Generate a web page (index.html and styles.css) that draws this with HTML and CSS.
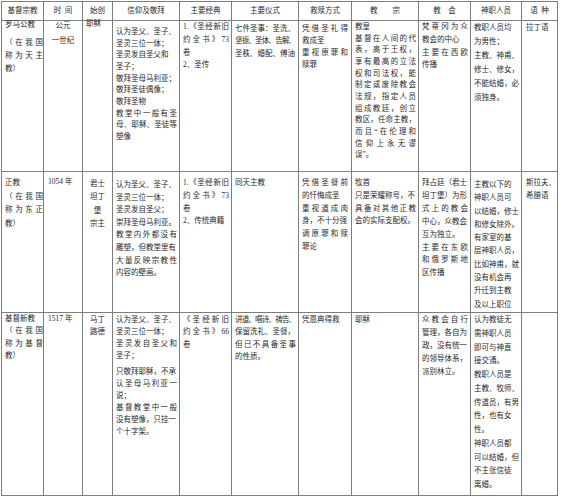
FILE: index.html
```html
<!DOCTYPE html>
<html lang="zh-CN">
<head>
<meta charset="utf-8">
<title>基督宗教比较表</title>
<link rel="stylesheet" href="styles.css">
</head>
<body>
<div class="tbl">
  <div class="h">基督宗教</div>
  <div class="h">时&nbsp;&nbsp;间</div>
  <div class="h">始创</div>
  <div class="h">信仰及敬拜</div>
  <div class="h">主要经典</div>
  <div class="h">主要仪式</div>
  <div class="h">救赎方式</div>
  <div class="h">教　　宗</div>
  <div class="h">教　会</div>
  <div class="h">神职人员</div>
  <div class="h">语&nbsp;&nbsp;种</div>

  <!-- 罗马公教 -->
  <div class="c r1 zj rel">
    <span class="l lead">罗马公教</span><span class="l j">（在我国</span><span class="l j">称为天主</span><span class="l">教）</span>
  </div>
  <div class="c r1 ctr hi lh15">
    <span class="l">公元</span><span class="l">一世纪</span>
  </div>
  <div class="c r1 hi">
    <span class="l">耶稣</span>
  </div>
  <div class="c r1 p5 lh117">
    <span class="l">认为圣父、圣子、</span><span class="l">圣灵三位一体；</span><span class="l">圣灵发自圣父和</span><span class="l">圣子；</span><span class="l">敬拜圣母马利亚；</span><span class="l">敬拜圣徒偶像；</span><span class="l">敬拜圣物</span><span class="l j">教堂中一般有圣</span><span class="l j">母、耶稣、圣徒等</span><span class="l">塑像</span>
  </div>
  <div class="c r1 p0">
    <span class="l j">1.《圣经新旧</span><span class="l j">约全书》73</span><span class="l">卷</span><span class="l">2、圣传</span>
  </div>
  <div class="c r1 p2 lh124">
    <span class="l">七件圣事：圣洗、</span><span class="l t">坚振、圣体、告解、</span><span class="l">圣秩、婚配、傅油</span>
  </div>
  <div class="c r1 p2 lh12 sr">
    <span class="l j">凭借圣礼得</span><span class="l">救成圣</span><span class="l j">重视原罪和</span><span class="l">赎罪</span>
  </div>
  <div class="c r1 p0 lh117">
    <span class="l">教皇</span><span class="l j">基督在人间的代</span><span class="l j">表，高于王权，</span><span class="l j">享有最高的立法</span><span class="l j">权和司法权，能</span><span class="l j">制定或废除教会</span><span class="l j">法规，指定人员</span><span class="l j">组成教廷，创立</span><span class="l j">教区，任命主教，</span><span class="l j">而且“在伦理和</span><span class="l j">信仰上永无谬</span><span class="l">误”。</span>
  </div>
  <div class="c r1 p0">
    <span class="l j">梵蒂冈为众</span><span class="l">教会的中心</span><span class="l j">主要在西欧</span><span class="l">传播</span>
  </div>
  <div class="c r1 p0 lh14 sm">
    <span class="l">教职人员均</span><span class="l">为男性；</span><span class="l">主教、神甫、</span><span class="l">修士、修女，</span><span class="l">不能结婚，必</span><span class="l">须独身。</span>
  </div>
  <div class="c r1 yu">
    <span class="l">拉丁语</span>
  </div>

  <!-- 正教 -->
  <div class="c r2 zj p4 lh134">
    <span class="l">正教</span><span class="l j">（在我国</span><span class="l j">称为东正</span><span class="l">教）</span>
  </div>
  <div class="c r2 p4 tm">
    <span class="l">1054 年</span>
  </div>
  <div class="c r2 ctr lh133">
    <span class="l">君士</span><span class="l">坦丁</span><span class="l">堡</span><span class="l">宗主</span>
  </div>
  <div class="c r2 p7 lh126">
    <span class="l">认为圣父、圣子、</span><span class="l">圣灵三位一体；</span><span class="l">圣灵发自圣父；</span><span class="l">崇拜圣母马利亚。</span><span class="l j">教堂内外都没有</span><span class="l">雕塑，但教堂里有</span><span class="l j">大量反映宗教性</span><span class="l">内容的壁画。</span>
  </div>
  <div class="c r2">
    <span class="l j">1.《圣经新旧</span><span class="l j">约全书》73</span><span class="l">卷</span><span class="l">2、传统典籍</span>
  </div>
  <div class="c r2">
    <span class="l">同天主教</span>
  </div>
  <div class="c r2 sr">
    <span class="l j">凭借圣餐前</span><span class="l">的忏悔成圣</span><span class="l j">重视道成肉</span><span class="l">身，不十分强</span><span class="l j">调原罪和赎</span><span class="l">罪论</span>
  </div>
  <div class="c r2">
    <span class="l">牧首</span><span class="l">只是荣耀称号，不</span><span class="l j">具备对其他正教</span><span class="l">会的实际支配权。</span>
  </div>
  <div class="c r2 lh129">
    <span class="l">拜占廷（君士</span><span class="l">坦丁堡）为形</span><span class="l j">式上的教会</span><span class="l">中心，众教会</span><span class="l">互为独立。</span><span class="l j">主要在东欧</span><span class="l j">和俄罗斯地</span><span class="l">区传播</span>
  </div>
  <div class="c r2 p6 lh133 sm">
    <span class="l">主教以下的</span><span class="l">神职人员可</span><span class="l">以结婚，修士</span><span class="l">和修女除外。</span><span class="l">有家室的基</span><span class="l">层神职人员，</span><span class="l">比如神甫，就</span><span class="l">没有机会再</span><span class="l">升迁到主教</span><span class="l">及以上职位</span>
  </div>
  <div class="c r2 yu">
    <span class="l">斯拉夫、</span><span class="l">希腊语</span>
  </div>

  <!-- 基督新教 -->
  <div class="c r3 zj p0 lh124">
    <span class="l">基督新教</span><span class="l j">（在我国</span><span class="l j">称为基督</span><span class="l">教）</span>
  </div>
  <div class="c r3 p0 tm">
    <span class="l">1517 年</span>
  </div>
  <div class="c r3 ctr lh12">
    <span class="l">马丁</span><span class="l">路德</span>
  </div>
  <div class="c r3 lh12">
    <span class="l">认为圣父、圣子、</span><span class="l">圣灵三位一体；</span><span class="l j">圣灵发自圣父和</span><span class="l gap">圣子；</span><span class="l">只敬拜耶稣，不承</span><span class="l j">认圣母马利亚一</span><span class="l">说；</span><span class="l j">基督教堂中一般</span><span class="l">没有塑像，只挂一</span><span class="l">个十字架。</span>
  </div>
  <div class="c r3 lh124">
    <span class="l j">《圣经新旧</span><span class="l j">约全书》66</span><span class="l">卷</span>
  </div>
  <div class="c r3 lh124">
    <span class="l t">讲道、唱诗、祷告、</span><span class="l">保留洗礼、圣餐，</span><span class="l j">但已不具备圣事</span><span class="l">的性质。</span>
  </div>
  <div class="c r3 sr">
    <span class="l">凭恩典得救</span>
  </div>
  <div class="c r3">
    <span class="l">耶稣</span>
  </div>
  <div class="c r3 lh129">
    <span class="l j">众教会自行</span><span class="l">管理，各自为</span><span class="l">政，没有统一</span><span class="l">的领导体系，</span><span class="l">派别林立。</span>
  </div>
  <div class="c r3 p0 lh1375 sm">
    <span class="l">认为教徒无</span><span class="l">需神职人员</span><span class="l">即可与神直</span><span class="l">接交通。</span><span class="l">教职人员是</span><span class="l">主教、牧师、</span><span class="l">传道员，有男</span><span class="l">性，也有女</span><span class="l">性。</span><span class="l">神职人员都</span><span class="l">可以结婚，但</span><span class="l">不主张信徒</span><span class="l">离婚。</span>
  </div>
  <div class="c r3 yu"></div>
</div>
</body>
</html>
```

FILE: styles.css
```css
html, body {
  margin: 0;
  padding: 0;
  background: #ffffff;
}

body {
  font-family: "Liberation Serif", "Noto Sans CJK SC", serif;
  font-size: 7.5px;
  color: #2a2a2a;
}

.tbl {
  display: grid;
  grid-template-columns: 42px 39px 30px 67px 52px 67px 53px 67px 52px 51px 36px;
  grid-template-rows: 19px 151px 141px 183px;
  width: max-content;
  margin: 1px 0 0 1px;
  border-left: 1px solid #7d7d7d;
  border-top: 1px solid #7d7d7d;
}

.h,
.c {
  box-sizing: border-box;
  border-right: 1px solid #7d7d7d;
  border-bottom: 1px solid #7d7d7d;
  min-width: 0;
}

.h {
  display: flex;
  align-items: center;
  justify-content: center;
  white-space: nowrap;
  line-height: 10px;
}

.c {
  padding: 0 2px 0 3px;
  line-height: 12.8px;
}

.l {
  display: block;
}

.j {
  text-align: justify;
  text-align-last: justify;
}

.t {
  letter-spacing: -0.8px;
}

/* row start offsets */
.r1 { padding-top: 1px; }
.r2 { padding-top: 5px; }
.r3 { padding-top: 1px; }

.p0 { padding-top: 0; }
.p2 { padding-top: 2px; }
.p4 { padding-top: 4px; }
.p5 { padding-top: 5px; }
.p6 { padding-top: 6px; }
.p7 { padding-top: 7px; }

/* line spacing */
.lh117 { line-height: 11.65px; }
.lh12 { line-height: 12px; }
.lh124 { line-height: 12.4px; }
.lh126 { line-height: 12.6px; }
.lh129 { line-height: 12.9px; }
.lh133 { line-height: 13.3px; }
.lh134 { line-height: 13.5px; }
.lh1375 { line-height: 13.75px; }
.lh14 { line-height: 14px; }
.lh15 { line-height: 15px; }

/* column specifics */
.zj { padding-right: 0; }
.rel { padding-top: 0; line-height: 13px; }
.rel .lead { line-height: 8px; margin-bottom: 7px; }

.hi { padding-top: 0; }
.hi .l:first-child { margin-top: -3px; }

.ctr {
  text-align: center;
  padding-left: 0;
  padding-right: 0;
}

.tm { padding-left: 4px; }
.sr { padding-right: 3px; }
.sm { padding-right: 1px; }
.yu { padding-left: 4px; padding-right: 0; white-space: nowrap; }

.gap { margin-bottom: 4px; }
```
